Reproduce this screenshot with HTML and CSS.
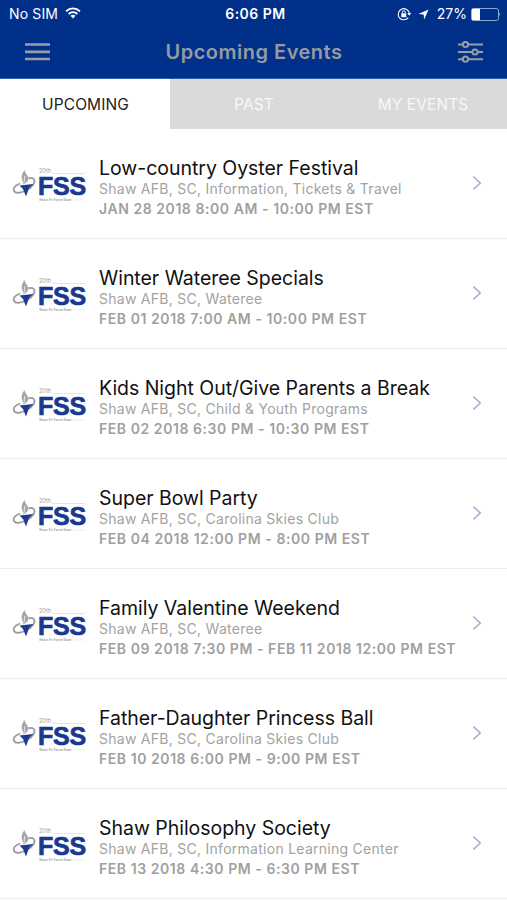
FILE: index.html
```
<!DOCTYPE html>
<html lang="en">
<head>
<meta charset="utf-8">
<title>Upcoming Events</title>
<link rel="stylesheet" href="styles.css">
</head>
<body>
<svg class="defs" aria-hidden="true">
  <symbol id="logo" viewBox="0 0 76 40">
    <path d="M12.500 2C10 5.500 9 8.500 10 11.500c.8 2 1.500 3 1 5 4-1.700 6.200-4.500 5-7.700-.6-1.800-3-3.300-3.500-6.800z" fill="#a3a5aa"/>
    <path d="M13.200 8c-2 3 .3 4.500-1.600 7.500" fill="none" stroke="#ecedef" stroke-width="1"/>
    <path d="M8 15.500C2.500 17.500.8 20.500 2 23c1.700 3 8.500 2 14-1.500 5-3.200 8-8 5.800-10.500-1.300-1.200-3.300-1.300-5.300-.6" fill="none" stroke="#96999f" stroke-width="1.700"/>
    <path d="M7.500 17.500l14-1.500-4.500 4-3 8.500-3-7.500z" fill="#1d3c8f"/>
    <path d="M40 5.500h33" stroke="#dcdde1" stroke-width=".8"/>
    <path d="M57 32h16" stroke="#e6e7ea" stroke-width=".7"/>
  </symbol>
  <symbol id="chevron" viewBox="0 0 10 16">
    <path d="M1.300 1.500L8.200 8l-6.900 6.500" fill="none" stroke="#a5b1d3" stroke-width="1.700"/>
  </symbol>
</svg>
<header class="header">
  <div class="status">
    <div class="status-left">
      <span>No SIM</span>
      <svg class="wifi" viewBox="0 0 16 12"><g fill="none" stroke="#fff" stroke-width="1.800"><path d="M1 4.300c4-3.900 10-3.900 14 0"/><path d="M3.600 7c2.500-2.500 6.300-2.500 8.800 0"/></g><path d="M5.500 8.800c1.400-1.400 3.600-1.400 5 0L8 11.500z" fill="#fff"/></svg>
    </div>
    <div class="clock">6:06 PM</div>
    <div class="status-right">
      <svg class="lock" viewBox="0 0 15 14"><path d="M11.300 10.600A5.600 5.600 0 1 1 12.300 6" fill="none" stroke="#fff" stroke-width="1.100"/><path d="M10.400 6h3.800l-1.900 2.700z" fill="#fff"/><path d="M4.300 6.300h5v3.900h-5z" fill="#fff"/><path d="M5.300 6.500V5.300a1.500 1.500 0 0 1 3 0v1.200" fill="none" stroke="#fff"/></svg>
      <svg class="arrow" viewBox="0 0 11 11"><path d="M10.500.5L6.200 10.500 5.600 5.500.5 4.900z" fill="#fff"/></svg>
      <span class="percent">27%</span>
      <svg class="battery" viewBox="0 0 30 13"><rect x=".5" y=".5" width="27" height="12" rx="2" fill="none" stroke="#9db2dc" stroke-width=".9"/><path d="M2 .8h7v11.400H2Q.8 12.200.8 11V2Q.8.800 2 .8z" fill="#fff"/><path d="M28.500 4.300q1.500 2.200 0 4.400z" fill="#fff"/></svg>
    </div>
  </div>
  <div class="nav">
    <svg class="menu" viewBox="0 0 25 18"><path d="M0 1.500h25M0 8.800h25M0 16h25" stroke="#999da5" stroke-width="2.700"/></svg>
    <h1>Upcoming Events</h1>
    <svg class="filter" viewBox="0 0 25 22"><g fill="none" stroke="#999da5" stroke-width="2"><path d="M0 3.500h5M10 3.500h15M0 11h14.500M19.500 11H25M0 18.200h5M10 18.200h15"/><circle cx="7.500" cy="3.500" r="2.600"/><circle cx="17" cy="11" r="2.600"/><circle cx="7.500" cy="18.200" r="2.600"/></g></svg>
  </div>
</header>
<nav class="tabs">
  <div class="tab active"><span>UPCOMING</span></div>
  <div class="tab"><span>PAST</span></div>
  <div class="tab"><span>MY EVENTS</span></div>
</nav>
<main id="events"></main>
<script src="events.js"></script>
</body>
</html>
```
FILE: styles.css
```
* { box-sizing: border-box; }
body { margin: 0; width: 507px; height: 900px; overflow: hidden; background: #fff; font-family: Inter, "Liberation Sans", sans-serif; }
.defs { display: none; }
svg { display: block; flex: none; }
.header { height: 79px; background: #003089; border-bottom: 1px solid #2d5ca8; }
.status { display: grid; grid-template-columns: 1fr auto 1fr; align-items: center; height: 28px; padding: 0 7px 0 9px; color: #fff; font-size: 14px; line-height: 18px; }
.status-left, .status-right { display: flex; align-items: center; }
.status-left { gap: 7px; letter-spacing: .15px; }
.status-right { justify-content: flex-end; }
.wifi { width: 16px; height: 12px; margin-top: -2px; }
.clock { font-weight: 600; letter-spacing: .5px; padding-left: 2px; }
.lock { width: 15px; height: 14px; margin-right: 6px; }
.arrow { width: 11px; height: 11px; margin-right: 8px; }
.percent { margin-right: 4px; letter-spacing: 0; }
.status-right { margin-right: -1px; }
.battery { width: 30px; height: 13px; }
.nav { display: flex; align-items: center; justify-content: space-between; height: 48px; padding: 0 24px 0 25px; }
.menu { width: 25px; height: 18px; }
.filter { width: 25px; height: 22px; }
h1 { margin: 0; font-size: 20px; line-height: 26px; font-weight: 600; letter-spacing: .5px; color: #959aa3; }
.tabs { display: grid; grid-template-columns: 170px 168px 169px; height: 50px; }
.tab { display: flex; align-items: center; justify-content: center; background: #dadada; color: #f7f7f7; font-size: 15.500px; letter-spacing: .1px; }
.tab:last-child { padding-left: 1px; }
.tab.active { background: #fff; color: #222; padding-left: 1px; }
.event { display: flex; align-items: center; height: 110px; padding: 0 24px 0 12px; border-bottom: 1px solid #eee; }
.logo { position: relative; width: 76px; height: 40px; margin: 8px 11px 0 0; flex: none; }
.logo svg { width: 76px; height: 40px; }
.logo span { position: absolute; white-space: nowrap; }
.logo .wing { left: 27px; top: 0; font-size: 5.500px; line-height: 7px; color: #9a9da3; }
.logo .name { left: 26px; top: 9px; font: 700 25px/18px "Liberation Sans", sans-serif; letter-spacing: -.2px; color: #18398f; -webkit-text-stroke: .7px #18398f; }
.logo .motto { left: 27px; top: 30.500px; font-size: 3.300px; line-height: 4px; color: #777; }
.info { flex: 1; white-space: nowrap; padding-top: 6px; }
.title { font-size: 19.500px; line-height: 24px; letter-spacing: -.03px; color: #111; }
.place { font-size: 14px; line-height: 17px; letter-spacing: .27px; color: #a2a2a2; }
.date { font-size: 14px; line-height: 18px; margin-top: 3px; font-weight: 600; letter-spacing: .56px; color: #a0a0a0; }
.chevron { width: 10px; height: 16px; margin: -1px 1px 0 0; }
```
FILE: events.js
```
const events = [
  ["Low-country Oyster Festival", "Shaw AFB, SC, Information, Tickets & Travel", "JAN 28 2018 8:00 AM - 10:00 PM EST"],
  ["Winter Wateree Specials", "Shaw AFB, SC, Wateree", "FEB 01 2018 7:00 AM - 10:00 PM EST"],
  ["Kids Night Out/Give Parents a Break", "Shaw AFB, SC, Child & Youth Programs", "FEB 02 2018 6:30 PM - 10:30 PM EST"],
  ["Super Bowl Party", "Shaw AFB, SC, Carolina Skies Club", "FEB 04 2018 12:00 PM - 8:00 PM EST"],
  ["Family Valentine Weekend", "Shaw AFB, SC, Wateree", "FEB 09 2018 7:30 PM - FEB 11 2018 12:00 PM EST"],
  ["Father-Daughter Princess Ball", "Shaw AFB, SC, Carolina Skies Club", "FEB 10 2018 6:00 PM - 9:00 PM EST"],
  ["Shaw Philosophy Society", "Shaw AFB, SC, Information Learning Center", "FEB 13 2018 4:30 PM - 6:30 PM EST"]
];
document.getElementById("events").innerHTML = events.map(([title, place, date]) => `
  <article class="event">
    <div class="logo"><svg><use href="#logo"/></svg><span class="wing">20th</span><span class="name">FSS</span><span class="motto">Shaw Air Force Base</span></div>
    <div class="info">
      <div class="title">${title}</div>
      <div class="place">${place.replace("&", "&amp;")}</div>
      <div class="date">${date}</div>
    </div>
    <svg class="chevron"><use href="#chevron"/></svg>
  </article>`).join("");
```
